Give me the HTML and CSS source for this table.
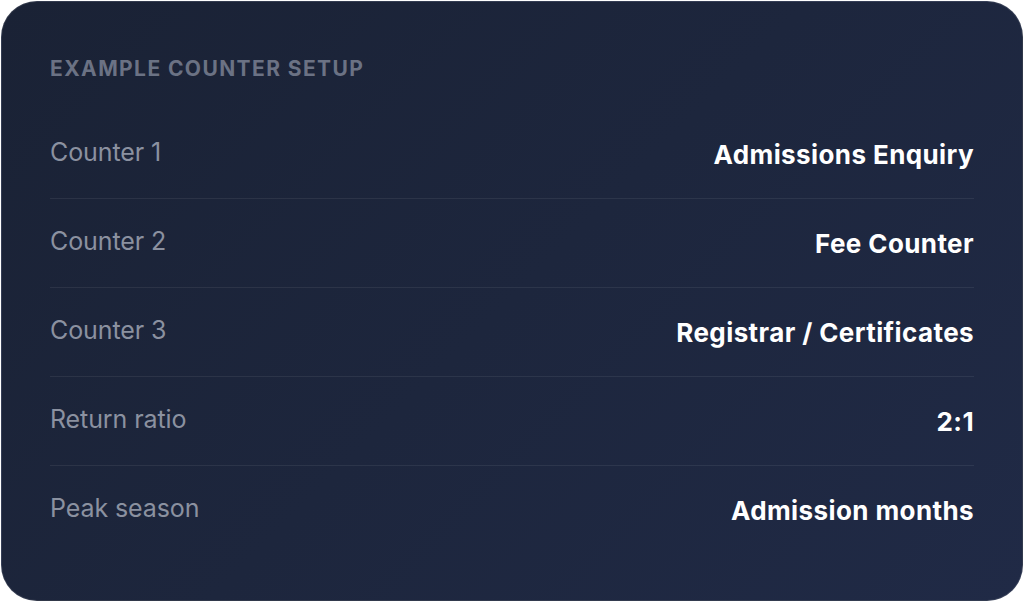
FILE: index.html
```html
<!DOCTYPE html>
<html lang="en">
<head>
    <meta charset="UTF-8">
    <meta name="viewport" content="width=device-width, initial-scale=1.0">
    <title>Example Counter Setup</title>
    <link rel="stylesheet" href="styles.css">
</head>
<body>
    <div class="card">
        <h3 class="card-title">Example Counter Setup</h3>
        <div class="rows">
            <div class="row">
                <span class="label">Counter 1</span>
                <span class="value">Admissions Enquiry</span>
            </div>
            <div class="row">
                <span class="label">Counter 2</span>
                <span class="value">Fee Counter</span>
            </div>
            <div class="row">
                <span class="label">Counter 3</span>
                <span class="value">Registrar / Certificates</span>
            </div>
            <div class="row">
                <span class="label">Return ratio</span>
                <span class="value">2:1</span>
            </div>
            <div class="row">
                <span class="label">Peak season</span>
                <span class="value">Admission months</span>
            </div>
        </div>
    </div>
</body>
</html>
```

FILE: styles.css
```css
body {
    font-family: Inter, "Noto Sans", sans-serif;
    margin: 0;
    padding: 1px;
    background-color: #ffffff;
}
.card {
    box-sizing: border-box;
    height: 600px;
    padding: 52px 48px 46px 48px;
    border: 1px solid rgba(255, 255, 255, 0.1);
    border-radius: 36px;
    background: linear-gradient(135deg, #1a2235 0%, #1d263d 50%, #202a46 100%);
}
.card-title {
    margin: 0 0 26px 0;
    font-size: 21px;
    font-weight: 700;
    line-height: 30px;
    letter-spacing: 1.4px;
    text-transform: uppercase;
    color: #6b7284;
}
.row {
    display: flex;
    justify-content: space-between;
    align-items: center;
    height: 88px;
    border-bottom: 1px solid rgba(255, 255, 255, 0.07);
}
.row:last-child {
    border-bottom: none;
}
.label {
    font-size: 25px;
    letter-spacing: -0.1px;
    color: #8b91a0;
    margin-top: -4px;
}
.value {
    font-size: 26px;
    font-weight: 700;
    letter-spacing: 0.4px;
    color: #ffffff;
}
```
